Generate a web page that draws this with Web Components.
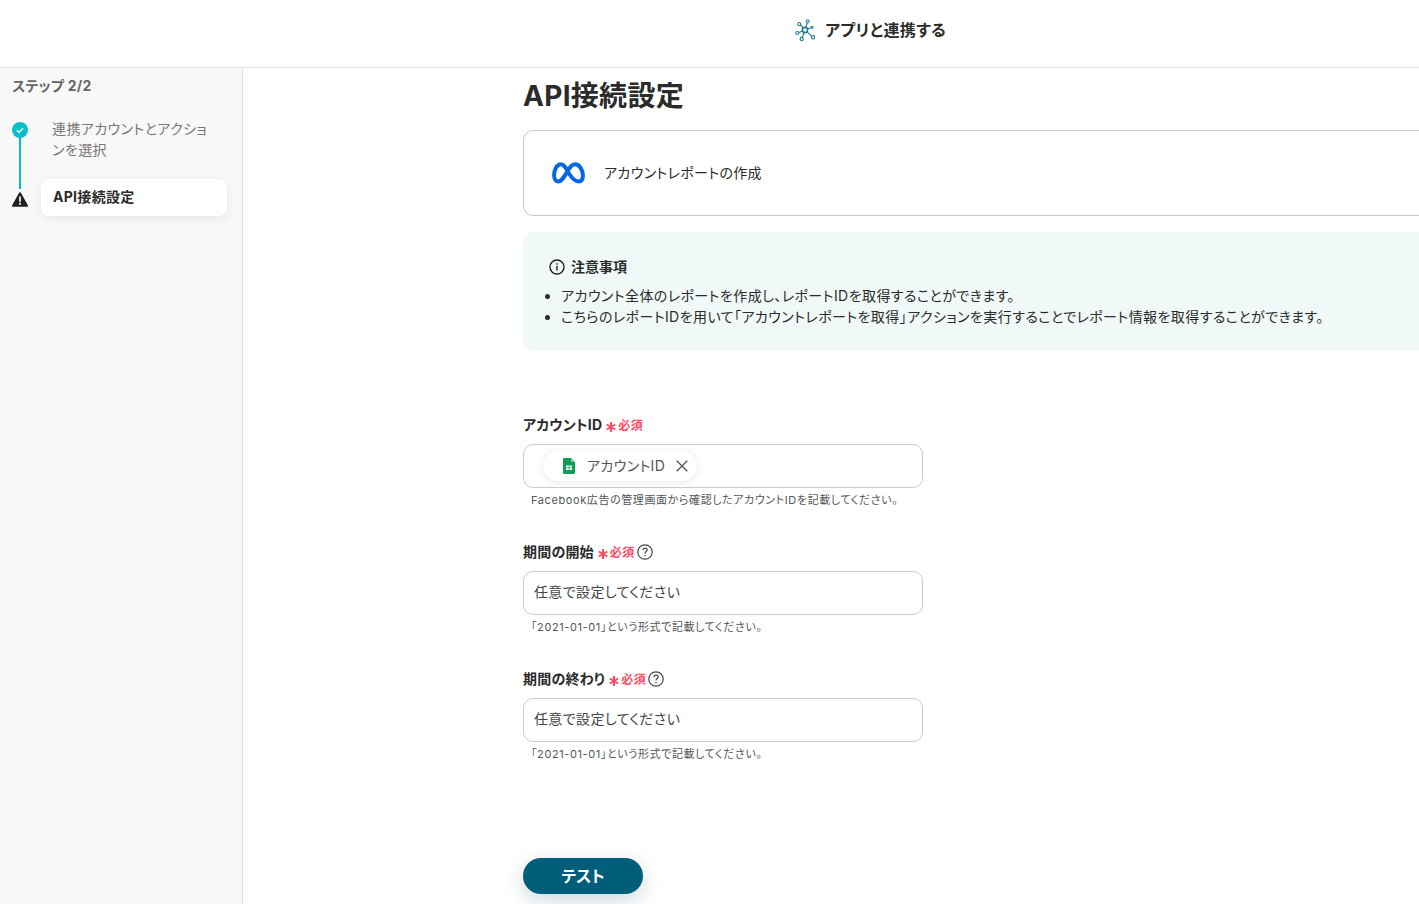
<!DOCTYPE html>
<html lang="ja">
<head>
<meta charset="utf-8">
<title>API接続設定</title>
<style>
  html, body { margin: 0; height: 100%; overflow: hidden; background: #fff; }
  body { font-family: Inter, "Noto Sans CJK JP", sans-serif; font-feature-settings: "palt"; color: #2b2b2b; }
</style>
</head>
<body>
<flow-app>
  <app-header slot="header">アプリと連携する</app-header>
  <step-sidebar slot="side"></step-sidebar>
  <h-title slot="main">API接続設定</h-title>
  <action-card slot="main">アカウントレポートの作成</action-card>
  <notice-box slot="main" heading="注意事項">
    <li>アカウント全体のレポートを作成し、レポートIDを取得することができます。</li>
    <li>こちらのレポートIDを用いて「アカウントレポートを取得」アクションを実行することでレポート情報を取得することができます。</li>
  </notice-box>
  <form-field slot="main" label="アカウントID" token="アカウントID" hint="Facebook広告の管理画面から確認したアカウントIDを記載してください。" first></form-field>
  <form-field slot="main" label="期間の開始" placeholder="任意で設定してください" hint="「2021-01-01」という形式で記載してください。" help></form-field>
  <form-field slot="main" label="期間の終わり" placeholder="任意で設定してください" hint="「2021-01-01」という形式で記載してください。" help></form-field>
  <test-button slot="main">テスト</test-button>
</flow-app>

<script>
class FlowApp extends HTMLElement {
  constructor() {
    super();
    this.attachShadow({ mode: 'open' });
    this.shadowRoot.innerHTML = `
      <style>
        :host { display: flex; flex-direction: column; height: 904px; overflow: hidden; }
        .body { flex: 1; display: flex; min-height: 0; }
        .main { flex: 1; min-width: 0; padding: 8px 0 0 280px; overflow: hidden; }
      </style>
      <slot name="header"></slot>
      <div class="body">
        <slot name="side"></slot>
        <div class="main"><slot name="main"></slot></div>
      </div>
    `;
  }
}

class AppHeader extends HTMLElement {
  constructor() {
    super();
    this.attachShadow({ mode: 'open' });
    this.shadowRoot.innerHTML = `
      <style>
        :host { display: flex; align-items: center; padding: 0 0 8px 795px; height: 59px; border-bottom: 1px solid #e2e2e2; }
        svg { width: 20px; height: 22px; margin-right: 10px; }
        span { font-size: 16px; font-weight: 700; color: #2b2b2b; letter-spacing: .4px; position: relative; top: -1px; }
      </style>
      <svg viewBox="0 0 20 22" fill="none" stroke="#1f7f95" stroke-width="1.1">
        <circle cx="10" cy="11" r="2.6" stroke-width="1.6"/>
        <circle cx="12.7" cy="2.300" r="1.500"/><path d="M12.300 3.800l-1.400 4.700"/>
        <circle cx="4.300" cy="5" r="1.500"/><path d="M5.400 6l2.800 3"/>
        <circle cx="17" cy="8.300" r="1"/><path d="M16 8.700l-3.500 1.400"/>
        <circle cx="18" cy="18.300" r="1.700"/><path d="M16.700 17.100l-4.800-4.500"/>
        <circle cx="6.700" cy="20" r="1.600"/><path d="M7.300 18.500l1.700-5"/>
        <circle cx="2.300" cy="14" r="1.500"/><path d="M3.800 13.500l3.800-1.400"/>
      </svg>
      <span><slot></slot></span>
    `;
  }
}

class StepSidebar extends HTMLElement {
  constructor() {
    super();
    this.attachShadow({ mode: 'open' });
    this.shadowRoot.innerHTML = `
      <style>
        :host { display: block; flex: none; background: #f8f8f8; border-right: 1px solid #e2e2e2; padding: 0 15px 0 12px; width: 215px; }
        .title { font-size: 14px; font-weight: 700; color: #666; line-height: 20px; margin-top: 8px; letter-spacing: .3px; }
        .steps { position: relative; margin-top: 23px; }
        .line { position: absolute; left: 7px; top: 10px; width: 2px; height: 60px; background: #00bfc8; }
        .step { display: flex; }
        .mark { width: 16px; flex: none; position: relative; }
        .done { display: block; width: 16px; height: 16px; margin-top: 3px; }
        .text { margin-left: 24px; font-size: 14px; line-height: 21px; color: #777; width: 160px; letter-spacing: .4px; position: relative; top: -1px; }
        .current { margin-top: 18px; align-items: center; }
        .warn { display: block; width: 16px; height: 15px; margin-top: 3px; position: relative; }
        .pill { margin-left: 13px; width: 186px; height: 37px; box-sizing: border-box; padding-left: 12px; background: #fff; border-radius: 8px; box-shadow: 0 2px 10px rgba(0,0,0,.08); font-size: 14px; font-weight: 700; line-height: 36px; letter-spacing: .3px; color: #2b2b2b; }
      </style>
      <div class="title">ステップ 2/2</div>
      <div class="steps">
        <div class="line"></div>
        <div class="step">
          <div class="mark">
            <svg class="done" viewBox="0 0 16 16">
              <defs><linearGradient id="g" x1="0" y1="0" x2="1" y2="1"><stop offset="0" stop-color="#00c8c0"/><stop offset="1" stop-color="#16b4d2"/></linearGradient></defs>
              <circle cx="8" cy="8" r="8" fill="url(#g)"/><path d="M4.800 8.200l2.200 2.100 4.100-4.200" fill="none" stroke="#fff" stroke-width="1.300"/>
            </svg>
          </div>
          <div class="text">連携アカウントとアクションを選択</div>
        </div>
        <div class="step current">
          <div class="mark">
            <svg class="warn" viewBox="0 0 16 15"><path d="M8 1.200L15 13.800H1z" fill="#222" stroke="#222" stroke-width="2" stroke-linejoin="round"/><path d="M8 4.500v5.200M8 10.800v2" stroke="#fff" stroke-width="1.700"/></svg>
          </div>
          <div class="pill">API接続設定</div>
        </div>
      </div>
    `;
  }
}

class HTitle extends HTMLElement {
  constructor() {
    super();
    this.attachShadow({ mode: 'open' });
    this.shadowRoot.innerHTML = `
      <style>
        :host { display: block; font-size: 28px; font-weight: 700; line-height: 40px; letter-spacing: .3px; color: #2b2b2b; }
      </style>
      <slot></slot>
    `;
  }
}

class ActionCard extends HTMLElement {
  constructor() {
    super();
    this.attachShadow({ mode: 'open' });
    this.shadowRoot.innerHTML = `
      <style>
        :host { display: flex; align-items: center; width: 1000px; height: 86px; box-sizing: border-box; margin-top: 14px; padding: 0 0 2px 28px; border: 1px solid #c6c6c6; border-radius: 10px; font-size: 14px; letter-spacing: .35px; color: #2b2b2b; }
        svg { width: 33px; height: 22px; margin-right: 19px; position: relative; top: 1px; }
      </style>
      <svg viewBox="0 0 33 22" fill="none" stroke="#0668e1" stroke-width="4">
        <path d="M17 11.500C14.200 6.500 12.300 2.300 8.900 2.300 4.800 2.300 2.100 8 2.100 13.200 2.100 17 3.800 19.400 6.500 19.400 10 19.400 12.300 14.500 16.200 8 18.100 4.800 20 2.300 23.200 2.300 27.400 2.300 30.900 8 30.900 13.500 30.900 17 29.500 19.400 26.700 19.400 23 19.400 20.500 17.200 17 11.500z"/>
      </svg>
      <slot></slot>
    `;
  }
}

class NoticeBox extends HTMLElement {
  constructor() {
    super();
    this.attachShadow({ mode: 'open' });
    this.shadowRoot.innerHTML = `
      <style>
        :host { display: block; width: 1000px; height: 119px; box-sizing: border-box; margin-top: 16px; padding: 24px 0 0 26px; background: #f0f9f7; border-radius: 10px; font-size: 14px; color: #2b2b2b; }
        .head { display: flex; align-items: center; font-size: 14px; font-weight: 700; line-height: 21px; }
        svg { width: 16px; height: 16px; margin-right: 6px; }
        ul { margin: 8px 0 0; padding: 0 0 0 12px; line-height: 21px; letter-spacing: .43px; white-space: nowrap; }
      </style>
      <div class="head">
        <svg viewBox="0 0 16 16" fill="none" stroke="#222" stroke-width="1.4"><circle cx="8" cy="8" r="7"/><path d="M8 7v4.500M8 4.200v1.500"/></svg>
        <span>${this.getAttribute('heading') || ''}</span>
      </div>
      <ul><slot></slot></ul>
    `;
  }
}

class FormField extends HTMLElement {
  constructor() {
    super();
    this.attachShadow({ mode: 'open' });
  }

  connectedCallback() {
    const label = this.getAttribute('label') || '';
    const token = this.getAttribute('token');
    const placeholder = this.getAttribute('placeholder') || '';
    const hint = this.getAttribute('hint') || '';
    const helpIcon = this.hasAttribute('help') ? `
      <svg class="help" viewBox="0 0 16 16" fill="none" stroke="#444" stroke-width="1.200"><circle cx="8" cy="8" r="7.200"/><path d="M5.900 6.200c0-1.300 1-2.100 2.200-2.100 1.200 0 2.100.8 2.100 1.900 0 1.500-2.200 1.700-2.200 3.400M8 11v1.300"/></svg>
    ` : '';
    const body = token ? `
      <div class="chip">
        <svg class="sheet" viewBox="0 0 12 16"><path d="M1.200 0H8l4 4v10.800c0 .7-.5 1.200-1.200 1.200H1.200C.5 16 0 15.500 0 14.800V1.200C0 .5.500 0 1.200 0z" fill="#0f9d58"/><path d="M8 0l4 4H8z" fill="#7fcba6"/><path d="M3 7.500h6v4.500H3z" fill="#fff"/><path d="M3 9.700h6M6 7.500v4.500" fill="none" stroke="#0f9d58" stroke-width=".7"/></svg>
        <span>${token}</span>
        <svg class="x" viewBox="0 0 12 12" fill="none" stroke="#555" stroke-width="1.300"><path d="M.7.700l10.600 10.600M11.300.700L.7 11.300"/></svg>
      </div>
    ` : `<span class="ph">${placeholder}</span>`;

    this.shadowRoot.innerHTML = `
      <style>
        :host { display: block; width: 400px; margin-top: 35px; }
        :host([first]) { margin-top: 64px; }
        .label { display: flex; align-items: center; height: 20px; font-size: 14px; font-weight: 700; line-height: 20px; letter-spacing: .2px; color: #2b2b2b; }
        .req { margin-left: 4px; font-size: 12px; font-weight: 700; letter-spacing: .5px; color: #fb4a64; display: flex; align-items: center; position: relative; top: 1px; }
        .star { width: 10px; height: 10px; margin-right: 2px; margin-top: 1px; }
        .help { width: 16px; height: 16px; margin-left: 2px; }
        .box { display: flex; align-items: center; height: 44px; box-sizing: border-box; margin-top: 9px; padding: 0 10px 4px; border: 1px solid #c5ccd6; border-radius: 10px; font-size: 14px; letter-spacing: .36px; color: #444; }
        .chip { display: flex; align-items: center; height: 30px; margin: 4px 0 0 9px; padding: 0 9px 0 20px; background: #fff; border-radius: 15px; box-shadow: 0 1px 8px rgba(0,0,0,.1); color: #555; }
        .chip span { position: relative; top: -1px; }
        .sheet { width: 12px; height: 16px; margin-right: 12px; }
        .x { width: 12px; height: 12px; margin-left: 11px; }
        .hint { margin: 5px 0 0 8px; font-size: 11px; line-height: 14px; letter-spacing: .6px; color: #555; white-space: nowrap; }
      </style>
      <div class="label">
        <span>${label}</span>
        <span class="req">
          <svg class="star" viewBox="0 0 10 10" stroke="#fb4a64" stroke-width="2"><path d="M5 0v10M.7 2.500l8.600 5M9.300 2.500l-8.600 5"/></svg>必須</span>
        ${helpIcon}
      </div>
      <div class="box">${body}</div>
      <div class="hint">${hint}</div>
    `;
  }
}

class TestButton extends HTMLElement {
  constructor() {
    super();
    this.attachShadow({ mode: 'open' });
    this.shadowRoot.innerHTML = `
      <style>
        :host { display: flex; align-items: center; justify-content: center; width: 120px; height: 36px; box-sizing: border-box; padding-bottom: 2px; margin-top: 97px; background: #005e7a; border-radius: 18px; box-shadow: 0 6px 20px rgba(0,60,80,.2); color: #fff; font-size: 16px; font-weight: 700; }
      </style>
      <slot></slot>
    `;
  }
}

customElements.define('flow-app', FlowApp);
customElements.define('app-header', AppHeader);
customElements.define('step-sidebar', StepSidebar);
customElements.define('h-title', HTitle);
customElements.define('action-card', ActionCard);
customElements.define('notice-box', NoticeBox);
customElements.define('form-field', FormField);
customElements.define('test-button', TestButton);
</script>
</body>
</html>
